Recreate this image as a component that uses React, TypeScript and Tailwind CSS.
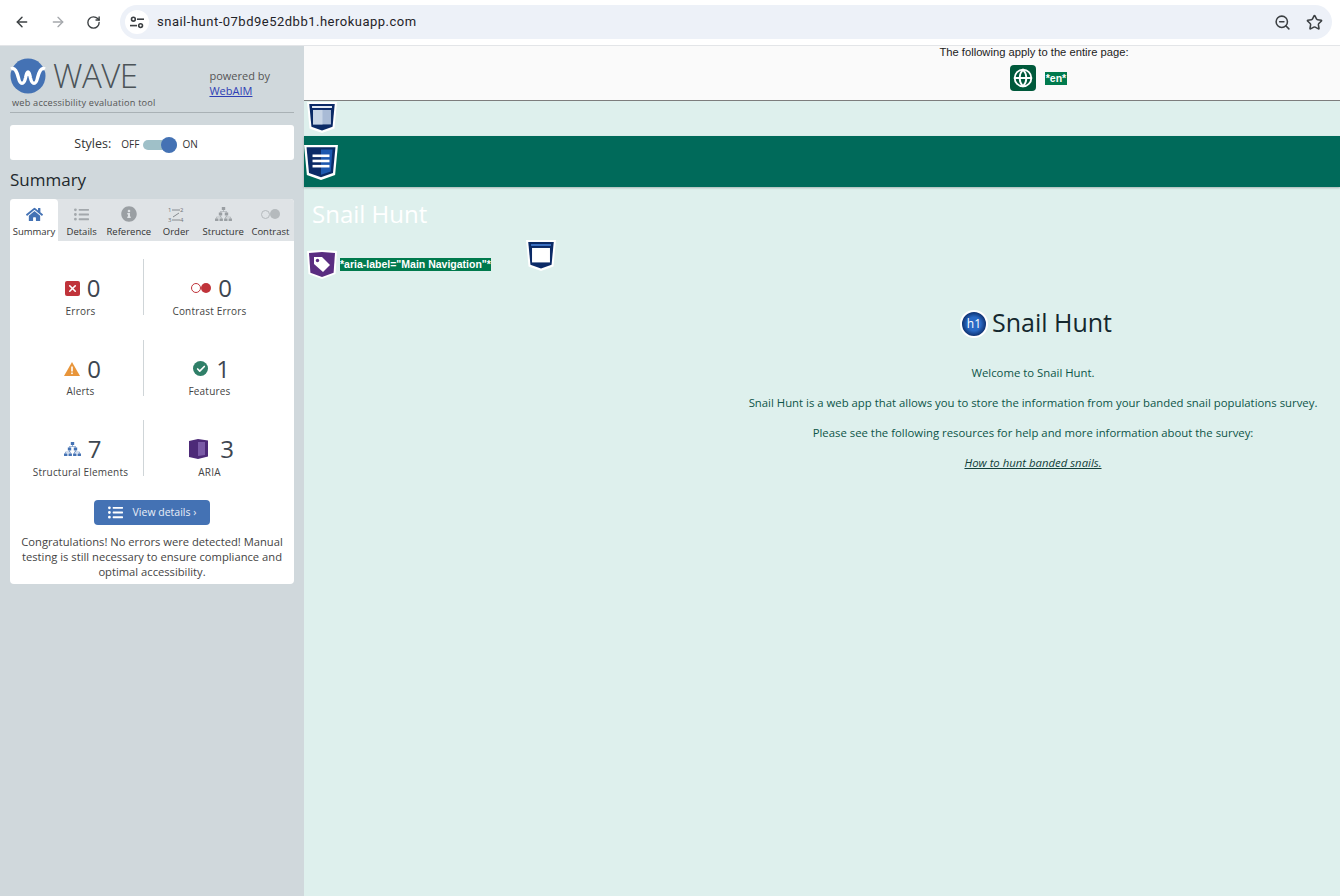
import { ArrowLeft, ArrowRight, RotateCw, ZoomOut, Star, X, Check, Globe } from "lucide-react";
import { FaHome, FaListUl, FaInfoCircle } from "react-icons/fa";

function Shield({ kind, size = 30 }: { kind: "window" | "windowLight" | "nav"; size?: number }) {
  return (
    <svg width={size} height={size * 1.03} viewBox="0 0 30 31" className="shrink-0">
      <path d="M0 0H30L27.5 26.5L15 31L2.5 26.5Z" fill="#fff" />
      <path d="M2.2 2H27.8L25.6 24.8L15 28.6L4.4 24.8Z" fill="#0b2a66" />
      {kind === "nav" ? (
        <>
          <path d="M15 4H25.2L23.6 23.4L15 26.4Z" fill="#1d58b0" />
          <rect x="7.5" y="8.4" width="15" height="2.3" fill="#fff" />
          <rect x="7.5" y="13" width="15" height="2.3" fill="#fff" />
          <rect x="7.5" y="17.6" width="15" height="2.3" fill="#fff" />
        </>
      ) : (
        <>
          <path d="M5 4H25V6H5Z" fill={kind === "window" ? "#e4ebf5" : "#3b6fc0"} />
          <rect x="6" y="8" width="18" height="14.5" fill={kind === "window" ? "#a9bbd6" : "#fff"} />
          {kind === "window" && <rect x="6" y="8" width="9.5" height="14.5" fill="#c8d5e6" />}
        </>
      )}
    </svg>
  );
}

function TagShield() {
  return (
    <svg width="30" height="29" viewBox="0 0 30 29" className="shrink-0">
      <path d="M0 1L15 0L30 1L28.5 24L15 29L1.500 24Z" fill="#fff" />
      <path d="M2 3L15 2L28 3L26.600 22.800L15 27L3.400 22.800Z" fill="#5a2d81" />
      <path d="M7 7H15L23 15L16 22L7 14Z" fill="#fff" />
      <circle cx="10.5" cy="10.5" r="1.7" fill="#5a2d81" />
    </svg>
  );
}

function Logo() {
  return (
    <svg width="36" height="36" viewBox="0 0 36 36" className="shrink-0">
      <circle cx="18" cy="18" r="17.5" fill="#4472b4" />
      <path d="M1 11C5 9 7 14 8.5 20C10 27 14 27 15.5 20C17 12 19 12 20.5 20C22 27 26 27 27.5 20C29 14 31 9 35 11" fill="none" stroke="#fff" strokeWidth="3.4" />
    </svg>
  );
}

function SiteInfoIcon() {
  return (
    <svg width="14" height="13" viewBox="0 0 14 13" fill="none" stroke="#3c4043" strokeWidth="1.6">
      <circle cx="3.4" cy="3.2" r="1.9" />
      <path d="M7 3.2H14" />
      <circle cx="10.6" cy="9.6" r="1.9" />
      <path d="M0 9.6H7" />
    </svg>
  );
}

function Tab({ icon, label, active }: { icon: React.ReactNode; label: string; active?: boolean }) {
  return (
    <div className={`flex flex-col items-center pt-[5px] h-[42px] text-[9.5px] leading-[12px] text-[#333] ${active ? "bg-white rounded-t-[4px] w-[48px]" : "flex-1"}`}>
      <div className="h-[20px] flex items-center justify-center">{icon}</div>
      <div className="mt-[2px] whitespace-nowrap">{label}</div>
    </div>
  );
}

function Stat({ icon, value, label, gap = "gap-[7px]", divider }: { icon: React.ReactNode; value: string; label: string; gap?: string; divider?: boolean }) {
  return (
    <div className={`h-[56px] flex flex-col items-center pt-[14px] ${divider ? "border-r border-[#cfd5d8] pl-[8px]" : ""}`}>
      <div className={`flex items-center ${gap} h-[30px] ml-[4px]`}>
        {icon}
        <span className="text-[24px] leading-[30px] text-[#3d4650]">{value}</span>
      </div>
      <div className="text-[10px] leading-[12px] mt-[1.5px] tracking-[0.2px] text-[#444] whitespace-nowrap">{label}</div>
    </div>
  );
}

function TreeIcon({ color, size = 17 }: { color: string; size?: number }) {
  return (
    <svg width={size} height={size * 0.88} viewBox="0 0 17 15" fill={color}>
      <rect x="6.8" y="0" width="3.4" height="3" />
      <rect x="3.8" y="5.5" width="3.4" height="3" />
      <rect x="9.8" y="5.5" width="3.4" height="3" />
      <rect x="0" y="11.5" width="3.4" height="3" />
      <rect x="4.5" y="11.5" width="3.4" height="3" />
      <rect x="9.1" y="11.5" width="3.4" height="3" />
      <rect x="13.6" y="11.5" width="3.4" height="3" />
      <path d="M8.2 3h.6v1.2h3v1.3h-.6v-.7H5.8v.7h-.6V4.200h3zM5.200 8.500h.6v1.300h.7v1.700h-.6v-1.100H2v1.100h-.6V9.800h3.800zM11.200 8.500h.6v1.300h3.800v1.700H15v-1.100h-4.200v1.100h-.6V9.800h1z" />
    </svg>
  );
}

export default function App() {
  return (
    <div className="w-[1340px] h-[896px] overflow-hidden flex flex-col bg-white font-['Open_Sans',sans-serif]">
      <header className="h-[46px] shrink-0 bg-white border-b border-[#e3e5e8] flex items-center pl-[14px] pr-[8px] pb-[1px]">
        <ArrowLeft size={16} strokeWidth={2.2} className="text-[#3c4043]" />
        <ArrowRight size={16} strokeWidth={2} className="text-[#a5a8ac] ml-[20px]" />
        <RotateCw size={15} strokeWidth={2.2} className="text-[#3c4043] ml-[20px]" />
        <div className="ml-[19px] flex-1 h-[34px] rounded-full bg-[#edf1f8] flex items-center pl-[5px] pr-[9px]">
          <div className="w-[24px] h-[24px] rounded-full bg-white flex items-center justify-center">
            <SiteInfoIcon />
          </div>
          <span className="ml-[8px] text-[13px] tracking-[0.5px] text-[#1f2328] font-['Roboto',sans-serif]">snail-hunt-07bd9e52dbb1.herokuapp.com</span>
          <ZoomOut size={17} strokeWidth={2.2} className="ml-auto text-[#3c4043]" />
          <Star size={17} strokeWidth={2.2} className="ml-[15px] text-[#3c4043]" />
        </div>
      </header>

      <div className="flex-1 flex min-h-0">
        <aside className="w-[304px] shrink-0 bg-[#d0d8dc] px-[10px]">
          <div className="h-[67px] border-b border-[#a9b1b5] relative">
            <div className="flex pt-[12px]">
              <Logo />
              <span className="ml-[7px] text-[33px] leading-[36px] font-light text-[#4b5358] tracking-[-0.5px]">WAVE</span>
            </div>
            <div className="absolute right-[24px] top-[22px] text-[11px] leading-[15px] text-[#555]">
              <div>powered by</div>
              <div className="text-[#2f3fb5] underline">WebAIM</div>
            </div>
            <div className="absolute left-[2px] top-[51px] text-[9.2px] leading-[12px] tracking-[0.2px] text-[#555] whitespace-nowrap">web accessibility evaluation tool</div>
          </div>

          <div className="mt-[12px] h-[35px] bg-white rounded-[3px] flex items-center justify-center pr-[32px] pt-[4px]">
            <span className="text-[12.5px] text-[#333]">Styles:</span>
            <span className="ml-[10px] text-[10px] text-[#333]">OFF</span>
            <div className="ml-[4px] w-[34px] h-[10px] rounded-full bg-[#9fc0c8] relative">
              <div className="absolute right-0 -top-[3px] w-[16px] h-[16px] rounded-full bg-[#4472b4]" />
            </div>
            <span className="ml-[5px] text-[10px] text-[#333]">ON</span>
          </div>

          <h2 className="mt-[9px] text-[17px] leading-[22px] text-[#22282c]">Summary</h2>

          <div className="mt-[8px] rounded-[4px] bg-white">
            <div className="flex bg-[#dfe3e6] rounded-t-[4px]">
              <Tab active label="Summary" icon={<FaHome size={17} className="text-[#4472b4]" />} />
              <Tab label="Details" icon={<FaListUl size={15} className="text-[#a3a8ac]" />} />
              <Tab label="Reference" icon={<FaInfoCircle size={16} className="text-[#9a9fa3]" />} />
              <Tab label="Order" icon={
                <svg width="16" height="17" viewBox="0 0 16 17" fill="#6f7478" stroke="none">
                  <text x="0" y="6" fontSize="6">1</text>
                  <text x="12" y="6" fontSize="6">2</text>
                  <text x="0" y="16" fontSize="6">3</text>
                  <text x="12" y="16" fontSize="6">4</text>
                  <path d="M4 4H12M11 7L5 11M4 14H12" fill="none" stroke="#6f7478" strokeWidth="0.8" />
                </svg>
              } />
              <Tab label="Structure" icon={<TreeIcon color="#9a9fa3" />} />
              <Tab label="Contrast" icon={
                <span className="flex items-center">
                  <span className="w-[9px] h-[9px] rounded-full border border-[#b5babd]" />
                  <span className="w-[10px] h-[10px] rounded-full bg-[#b5babd]" />
                </span>
              } />
            </div>

            <div className="grid grid-cols-[134px_131px] gap-y-[24.5px] pt-[18px]">
              <Stat divider value="0" label="Errors" icon={
                <span className="w-[15px] h-[15px] bg-[#c0333a] rounded-[2px] flex items-center justify-center"><X size={11} strokeWidth={3.5} className="text-white" /></span>
              } />
              <Stat value="0" label="Contrast Errors" icon={
                <span className="flex items-center">
                  <span className="w-[10px] h-[10px] rounded-full border-[1.5px] border-[#c0333a]" />
                  <span className="w-[10px] h-[10px] rounded-full bg-[#c0333a]" />
                </span>
              } />
              <Stat divider value="0" label="Alerts" icon={
                <svg width="16" height="14" viewBox="0 0 16 14"><path d="M8 0L16 14H0Z" fill="#e8953a" /><rect x="7.2" y="4.5" width="1.6" height="5" fill="#fff" /><rect x="7.2" y="10.5" width="1.6" height="1.6" fill="#fff" /></svg>
              } />
              <Stat value="1" label="Features" gap="gap-[8px]" icon={
                <span className="w-[15px] h-[15px] rounded-full bg-[#2f7f68] flex items-center justify-center"><Check size={10} strokeWidth={4} className="text-white" /></span>
              } />
              <Stat divider value="7" label="Structural Elements" icon={<TreeIcon color="#4472b4" />} />
              <Stat value="3" label="ARIA" gap="gap-[12px]" icon={
                <svg width="19" height="20" viewBox="0 0 19 20"><path d="M0 2L9 0L19 1.5V17.5L9 20L0 18Z" fill="#4d2a78" /><path d="M9 3H16V16L9 17Z" fill="#7a5aa6" /></svg>
              } />
            </div>

            <div className="mt-[24px] flex justify-center">
              <div className="w-[116px] h-[25px] bg-[#4472b4] rounded-[4px] flex items-center justify-center gap-[10px] text-[10.5px] text-[#e8eef7]">
                <FaListUl size={15} className="text-white" />
                <span>View details ›</span>
              </div>
            </div>

            <p className="mt-[9px] pb-[5px] px-[5px] text-center text-[11.2px] leading-[15px] text-[#444]">
              Congratulations! No errors were detected! Manual testing is still necessary to ensure compliance and optimal accessibility.
            </p>
          </div>
        </aside>

        <main className="flex-1 bg-[#def0ed] min-w-0">
          <div className="h-[55px] bg-[#fafafa] border-b border-[#7d7d7d] flex flex-col items-center pl-[424px] font-['Liberation_Sans',sans-serif]">
            <div className="text-[11.2px] leading-[14px] text-[#222] whitespace-nowrap -mt-[1px]">The following apply to the entire page:</div>
            <div className="mt-[6px] flex items-center gap-[9px] pl-[9px]">
              <span className="w-[26px] h-[26px] bg-[#00593b] rounded-[4px] flex items-center justify-center">
                <Globe size={20} strokeWidth={2.2} className="text-white" />
              </span>
              <span className="bg-[#007a4d] text-white text-[10.5px] font-bold leading-[13px] px-[0.5px]">*en*</span>
            </div>
          </div>

          <div className="h-[35px] pl-[3px] pt-[1px]"><Shield kind="window" /></div>

          <div className="h-[51px] bg-[#006a5a] shadow-[0_1px_2px_rgba(0,0,0,0.25)] pt-[9px]">
            <Shield kind="nav" size={34} />
          </div>

          <div className="mt-[13px] pl-[8px] text-[24px] leading-[28px] text-white">Snail Hunt</div>

          <div className="mt-[12px] h-[44px] flex items-start pl-[3px] font-['Liberation_Sans',sans-serif]">
            <span className="mt-[10px]"><TagShield /></span>
            <span className="mt-[18px] ml-[3px] bg-[#007a4d] text-white text-[10.5px] font-bold leading-[13px] whitespace-nowrap">*aria-label="Main Navigation"*</span>
            <span className="ml-[35px]"><Shield kind="windowLight" /></span>
          </div>

          <div className="ml-auto w-[610px] text-center pr-[4px]">
            <h1 className="mt-[20px] pl-[6px] flex items-center justify-center text-[25px] leading-[36px] text-[#14282e]">
              <span className="mt-[4px] w-[28px] h-[28px] rounded-full bg-[radial-gradient(circle,#2a69c4_40%,#0b2a66_75%)] border-[2px] border-white flex items-center justify-center text-[12px] text-white mr-[4px]">h1</span>
              Snail Hunt
            </h1>
            <p className="mt-[25px] text-[11.35px] leading-[16px] text-[#0d5548] whitespace-nowrap">Welcome to Snail Hunt.</p>
            <p className="mt-[14px] text-[11.35px] leading-[16px] text-[#0d5548] whitespace-nowrap">Snail Hunt is a web app that allows you to store the information from your banded snail populations survey.</p>
            <p className="mt-[14px] text-[11.35px] leading-[16px] text-[#0d5548] whitespace-nowrap">Please see the following resources for help and more information about the survey:</p>
            <p className="mt-[14px] text-[11.35px] leading-[16px] italic underline text-[#123f3a]">How to hunt banded snails.</p>
          </div>
        </main>
      </div>
    </div>
  );
}
